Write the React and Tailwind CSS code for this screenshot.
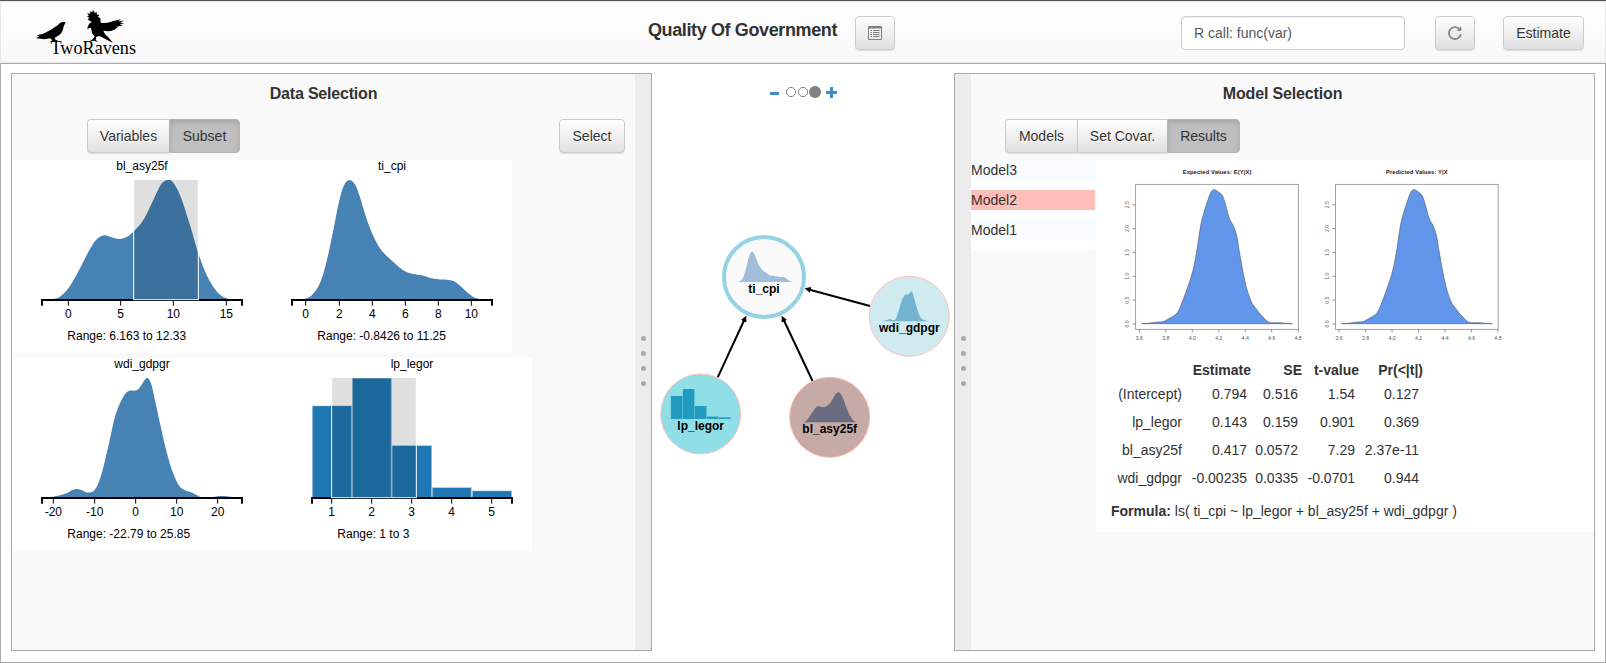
import React from "react";

const spline = (p) => {
  let d = `M${p[0][0]},${p[0][1]}`;
  for (let i = 0; i < p.length - 1; i++) {
    const a = p[i - 1] || p[i];
    const b = p[i];
    const c = p[i + 1];
    const e = p[i + 2] || c;
    d += `C${b[0] + (c[0] - a[0]) / 6},${b[1] + (c[1] - a[1]) / 6} ${c[0] - (e[0] - b[0]) / 6},${c[1] - (e[1] - b[1]) / 6} ${c[0]},${c[1]}`;
  }
  return d;
};

const BL = [[156, 448], [180, 440], [205, 415], [228, 377], [250, 335], [270, 297], [290, 268], [312, 256], [335, 262], [357, 267], [380, 261], [402, 243], [430, 210], [460, 150], [480, 108], [493, 94], [505, 90], [518, 96], [540, 135], [570, 225], [595, 310], [620, 375], [645, 418], [665, 438], [687, 448]];
const TI = [[98, 448], [120, 440], [140, 418], [158, 378], [175, 312], [192, 230], [207, 155], [222, 106], [239, 90], [256, 105], [270, 142], [290, 207], [310, 258], [332, 298], [358, 325], [380, 345], [405, 364], [430, 372], [455, 376], [480, 384], [505, 388], [530, 389], [550, 393], [570, 407], [595, 430], [612, 442], [632, 448]];
const WDI = [[156, 441], [180, 436], [200, 430], [217, 420], [232, 417], [246, 421], [258, 427], [272, 427], [284, 420], [297, 395], [310, 352], [328, 275], [345, 200], [362, 155], [378, 129], [390, 122], [410, 121], [422, 109], [434, 90], [443, 84], [454, 103], [466, 155], [480, 220], [497, 295], [515, 358], [532, 398], [545, 415], [560, 423], [577, 428], [590, 435], [604, 441], [640, 441], [652, 439], [665, 438], [680, 439], [694, 441]];
const BARS = [[66, 167, 120], [186, 84, 119], [305, 286, 121], [426, 412, 119], [546, 422, 120]];
const SIM = [[155, 506], [175, 505], [195, 502], [218, 500], [228, 496], [240, 489], [254, 481], [265, 468], [276, 443], [290, 405], [308, 350], [320, 290], [332, 212], [342, 172], [353, 138], [360, 118], [366, 107], [374, 104], [384, 110], [396, 120], [404, 140], [418, 190], [430, 212], [440, 242], [448, 290], [458, 345], [468, 393], [482, 436], [494, 456], [508, 474], [524, 491], [534, 500], [544, 503], [568, 503], [585, 505], [607, 506]];

const font = "font-['Liberation_Sans',Arial,sans-serif]";

function Btn({ children, active, className = "" }) {
  return (
    <button
      className={`flex h-[34px] items-center justify-center border text-[14px] leading-5 text-[#333] ${
        active
          ? "border-[#b4b4b4] bg-[#bfbfbf] shadow-[inset_0_3px_5px_rgba(0,0,0,0.125)]"
          : "border-[#ccc] bg-linear-to-b from-white to-[#e0e0e0] shadow-[0_1px_1px_rgba(0,0,0,0.1)] [text-shadow:0_1px_0_#fff]"
      } ${className}`}
    >
      {children}
    </button>
  );
}

function Plot({ width = 250, ox, oy, axis, base, ticks, title, titleX, range, rangeX, sel, children }) {
  return (
    <svg width={width} height="193" className="block shrink-0" fontSize="12">
      <text x={titleX} y={(base - 390) / 3 + oy} textAnchor="middle">{title}</text>
      <g transform={`translate(${ox},${oy}) scale(0.33333)`}>
        {children}
        <path d={`M${axis[0]},${base + 17}V${base}H${axis[1]}V${base + 17}`} fill="none" stroke="#000" strokeWidth="5.6" />
        {ticks.map(([x]) => (
          <path key={x} d={`M${x},${base}v17`} stroke="#000" strokeWidth="3" />
        ))}
        {sel && (
          <g>
            <rect x={sel[0]} y={base - 360} width={sel[1] - sel[0]} height="359" fill="#000" fillOpacity="0.125" />
            <rect x={sel[0] - 1} y={base - 362} width={sel[1] - sel[0] + 2} height="361" fill="none" stroke="#fff" strokeWidth="3" />
          </g>
        )}
      </g>
      {ticks.map(([x, l]) => (
        <text key={x} x={x / 3 + ox} y={(base + 54) / 3 + oy} textAnchor="middle">{l}</text>
      ))}
      <text x={rangeX} y={(base + 120) / 3 + oy}>{range}</text>
    </svg>
  );
}

function Handle() {
  return (
    <div className="flex w-4 shrink-0 flex-col items-center gap-[10px] bg-[#ececec] pt-[262px]">
      <i className="size-[5px] rounded-full bg-[#aaa]" />
      <i className="size-[5px] rounded-full bg-[#aaa]" />
      <i className="size-[5px] rounded-full bg-[#aaa]" />
      <i className="size-[5px] rounded-full bg-[#aaa]" />
    </div>
  );
}

function Logo() {
  return (
    <svg width="112" height="56" viewBox="0 0 112 56" className="ml-[33px] mt-[4px] shrink-0">
      <g transform="translate(-34,-6) scale(0.33333)">
        <path d="M197 67L188 66Q179 67 173 76L150 91L130 101L110 106L118 109L108 115L134 118L150 115L158 121L150 124L176 124L165 118L164 113Q182 105 187 94Q190 78 197 67Z" />
        <path d="M261 86L266 74Q270 67 277 68L263 58L268 54L261 49L267 46L261 39L271 41L270 34L277 37L279 29L284 38L292 37L289 43L298 45L294 50L301 55L302 68Q320 72 338 64L364 57L354 64L372 62L360 68L373 70L360 73L368 78L354 79Q347 92 325 94L310 92Q313 104 325 112L339 129L316 117L299 108L289 110L287 119L294 126L282 122L264 127L276 119L284 110L276 99L273 83Z" />
      </g>
      <text x="16.5" y="48.3" fontFamily="'Liberation Serif', serif" fontSize="19.5" textLength="85.5" lengthAdjust="spacingAndGlyphs">TwoRavens</text>
    </svg>
  );
}

function Node({ x, y, fill, ring, w = 1, label, dy, children }) {
  return (
    <g transform={`translate(${x},${y})`}>
      <circle r="40" fill={fill} stroke={ring} strokeWidth={w} />
      {children}
      <text y={dy} textAnchor="middle" fontWeight="bold" fontSize="12">{label}</text>
    </g>
  );
}

function Graph() {
  return (
    <svg width="302" height="380" viewBox="652 100 302 380" className="block">
      <defs>
        <marker id="tip" viewBox="0 -5 10 10" refX="6" markerWidth="3" markerHeight="3" orient="auto">
          <path d="M0,-5L10,0L0,5" />
        </marker>
      </defs>
      <g stroke="#000" strokeWidth="2">
        <path d="M717.7 377.3L745.2 318" markerEnd="url(#tip)" />
        <path d="M812.7 381.3L782.8 318" markerEnd="url(#tip)" />
        <path d="M870 306L807 289" markerEnd="url(#tip)" />
      </g>
      <Node x={764} y={277} fill="#fafafa" ring="#95d2e3" w={4} label="ti_cpi" dy={16}>
        <path transform="translate(-36.6,-32.6) scale(0.1033,0.0838)" d={spline(TI)} fill="#4682b4" fillOpacity="0.5" />
      </Node>
      <Node x={909.3} y={316.3} fill="#d0ebf0" ring="#ffc0bb" label="wdi_gdpgr" dy={16}>
        <path transform="translate(-43.5,-32) scale(0.1033,0.0838)" d={spline(WDI)} fill="#4197bf" fillOpacity="0.65" />
      </Node>
      <Node x={700.7} y={414} fill="#91dfe6" ring="#ffc0bb" label="lp_legor" dy={16}>
        {BARS.map(([x, y, w]) => (
          <rect key={x} x={-30 + (x - 66) * 0.1 + 0.2} y={5 - (441 - y) * 0.084} width={w * 0.1 - 0.4} height={(441 - y) * 0.084} fill="#229bc0" />
        ))}
      </Node>
      <Node x={829.7} y={417.3} fill="#c5aaa5" ring="#ffb5af" label="bl_asy25f" dy={15.5}>
        <path transform="translate(-43.5,-32.5) scale(0.1033,0.0838)" d={spline(BL)} fill="#696c81" />
      </Node>
    </svg>
  );
}

function SimPlot({ dx, title, titleW }) {
  const ys = ["0.0", "0.5", "1.0", "1.5", "2.0", "2.5"];
  const xs = ["3.6", "3.8", "4.0", "4.2", "4.4", "4.6", "4.8"];
  return (
    <g transform={`translate(${dx - 6},-5) scale(0.33333)`} fontSize="15.5" fill="#555" textAnchor="middle">
      <text x="381" y="58" fontSize="17.5" fontWeight="bold" fill="#222" textLength={titleW}>{title}</text>
      <path d={spline(SIM) + "Z"} fill="#6196ea" stroke="#555f70" strokeWidth="2" />
      <rect x="137" y="88" width="488" height="435" fill="none" stroke="#8a8a8a" strokeWidth="2.4" />
      {ys.map((t, i) => (
        <g key={t}>
          <path d={`M128,${507 - i * 71.6}h9`} stroke="#777" strokeWidth="2.4" />
          <text transform={`translate(117,${507 - i * 71.6}) rotate(-90)`}>{t}</text>
        </g>
      ))}
      {xs.map((t, i) => (
        <g key={t}>
          <path d={`M${148 + i * 79.4},523v9`} stroke="#777" strokeWidth="2.4" />
          <text x={148 + i * 79.4} y="556">{t}</text>
        </g>
      ))}
    </g>
  );
}

const rows = [
  ["(Intercept)", "0.794", "0.516", "1.54", "0.127"],
  ["lp_legor", "0.143", "0.159", "0.901", "0.369"],
  ["bl_asy25f", "0.417", "0.0572", "7.29", "2.37e-11"],
  ["wdi_gdpgr", "-0.00235", "0.0335", "-0.0701", "0.944"],
];

export default function App() {
  return (
    <div className={`flex h-[663px] w-[1606px] flex-col overflow-hidden bg-white text-[14px] text-[#333] ${font}`}>
      <header className="flex h-[64px] shrink-0 items-start border-t border-b border-t-[#555] border-b-[#aaa] bg-[#f0f0f0]">
        <div className="flex h-[62px] w-full items-start rounded border border-[#e7e7e7] bg-linear-to-b from-white to-[#f8f8f8]">
          <Logo />
          <h1 className="ml-[502px] mt-[17px] w-[190px] text-[18px] leading-[22px] font-bold tracking-[-0.38px] whitespace-nowrap">Quality Of Government</h1>
          <Btn className="ml-[17px] mt-[14px] w-10 rounded">
            <svg width="14" height="14" viewBox="0 0 14 14" fill="none" stroke="#808080">
              <path d="M.5 .5H13.5V13.5H.5Z" />
              <path d="M1 1.5H13" strokeWidth="2" />
              <path d="M2.5 4.5h1.5M2.5 6.5h1.5M2.5 8.5h1.5M2.5 10.5h1.5M5 4.5h6.5M5 6.5h6.5M5 8.5h6.5M5 10.5h6.5" />
            </svg>
          </Btn>
          <div className="ml-[286px] mt-[14px] flex h-[34px] w-[224px] items-center rounded border border-[#ccc] bg-white px-3 text-[#555] shadow-[inset_0_1px_1px_rgba(0,0,0,0.075)]">
            R call: func(var)
          </div>
          <Btn className="ml-[30px] mt-[14px] w-10 rounded">
            <svg width="14" height="14" viewBox="0 0 14 14" fill="none" stroke="#868686" strokeWidth="1.8">
              <path d="M11.2 2.8A6 6 0 1 0 12.9 8" />
              <path d="M13.4 .2V5H8.6Z" fill="#868686" stroke="none" />
            </svg>
          </Btn>
          <Btn className="ml-[28px] mt-[14px] w-[81px] rounded">Estimate</Btn>
        </div>
      </header>

      <main className="flex flex-1 border-x border-b border-[#aaa] pt-[9px]">
        <section className="ml-[10px] flex h-[578px] w-[641px] shrink-0 border border-[#aaa] bg-[#f9f9f9]">
          <div className="flex flex-1 flex-col">
            <h2 className="mt-[10px] text-center text-[16px] leading-5 font-bold tracking-[-0.2px]">Data Selection</h2>
            <div className="mt-[15px] flex pl-[75px]">
              <Btn className="w-[82px] rounded-l border-r-0">Variables</Btn>
              <Btn active className="w-[71px] rounded-r">Subset</Btn>
              <Btn className="ml-[319px] w-[66px] rounded">Select</Btn>
            </div>
            <div className="mt-[7px] flex w-[500px] bg-white text-black">
              <Plot ox={-12} oy={-10} axis={[126, 726]} base={450} title="bl_asy25f" titleX={130} range="Range: 6.163 to 12.33" rangeX={55.3} sel={[402, 594]} ticks={[[205, "0"], [362, "5"], [520, "10"], [679, "15"]]}>
                <path d={spline(BL)} fill="#4682b4" />
              </Plot>
              <Plot ox={8} oy={-10} axis={[66, 666]} base={450} title="ti_cpi" titleX={130} range="Range: -0.8426 to 11.25" rangeX={55.3} ticks={[[107, "0"], [208, "2"], [307, "4"], [406, "6"], [505, "8"], [604, "10"]]}>
                <path d={spline(TI)} fill="#4682b4" />
              </Plot>
            </div>
            <div className="mt-[5px] flex w-[520px] bg-white text-black">
              <Plot width={270} ox={-12} oy={-8} axis={[126, 726]} base={444} title="wdi_gdpgr" titleX={130} range="Range: -22.79 to 25.85" rangeX={55.3} ticks={[[160, "-20"], [284, "-10"], [407, "0"], [530, "10"], [653, "20"]]}>
                <path d={spline(WDI)} fill="#4682b4" />
              </Plot>
              <Plot ox={8} oy={-8} axis={[66, 666]} base={444} title="lp_legor" titleX={130} range="Range: 1 to 3" rangeX={55.3} sel={[126, 378]} ticks={[[125, "1"], [245, "2"], [365, "3"], [485, "4"], [605, "5"]]}>
                {BARS.map(([x, y, w]) => (
                  <g key={x}>
                    <rect x={x} y={y} width={w} height={441 - y} fill="#1f77b4" />
                    <path d={`M${x + 1},442V${y}H${x + w - 1}V442`} stroke="#fff" strokeOpacity="0.6" strokeWidth="3" fill="none" />
                  </g>
                ))}
              </Plot>
            </div>
          </div>
          <Handle />
        </section>

        <section className="flex w-[302px] shrink-0 flex-col">
          <svg width="302" height="27" viewBox="652 73 302 27" className="block">
            <path d="M770 93.5h9" stroke="#428bca" strokeWidth="3" />
            <circle cx="791" cy="92" r="4.6" fill="#fff" stroke="#808080" />
            <circle cx="803" cy="92" r="4.6" fill="#fff" stroke="#808080" />
            <circle cx="815" cy="92" r="6" fill="#808080" />
            <path d="M826 92.5h11M831.5 87v11" stroke="#428bca" strokeWidth="3" />
          </svg>
          <Graph />
        </section>

        <section className="flex h-[578px] w-[641px] shrink-0 border border-[#aaa] bg-[#f9f9f9]">
          <Handle />
          <div className="flex flex-1 flex-col">
            <h2 className="mt-[10px] text-center text-[16px] leading-5 font-bold tracking-[-0.15px]">Model Selection</h2>
            <div className="mt-[15px] flex pl-[34px]">
              <Btn className="w-[72px] rounded-l border-r-0">Models</Btn>
              <Btn className="w-[90px] border-r-0">Set Covar.</Btn>
              <Btn active className="w-[73px] rounded-r">Results</Btn>
            </div>
            <div className="mt-[7px] flex items-start">
              <div className="flex w-[124px] flex-col gap-[10px] bg-white pb-[10px] leading-5">
                <div className="bg-[#f8fcff]">Model3</div>
                <div className="bg-[#ffbdb8]">Model2</div>
                <div className="bg-[#f8fcff]">Model1</div>
              </div>
              <div className="ml-px h-[372px] flex-1 bg-white">
                <svg width="440" height="200" className="block">
                  <SimPlot dx={0} title="Expected Values: E(Y|X)" titleW={206} />
                  <SimPlot dx={199.8} title="Predicted Values: Y|X" titleW={185} />
                </svg>
                <div className="grid w-[327px] grid-cols-[86px_69px_51px_57px_64px] text-right leading-5 whitespace-nowrap">
                  <span />
                  <b>Estimate</b>
                  <b>SE</b>
                  <b>t-value</b>
                  <b>Pr(&lt;|t|)</b>
                </div>
                <div className="mt-1 grid w-[327px] grid-cols-[86px_69px_51px_57px_64px] gap-y-2 text-right leading-5 whitespace-nowrap">
                  {rows.map((r) =>
                    r.map((c, i) => (
                      <span key={r[0] + i} className={i ? "pr-1" : ""}>{c}</span>
                    ))
                  )}
                </div>
                <p className="mt-[13px] ml-[15px] leading-5 whitespace-nowrap">
                  <b>Formula:</b> ls( ti_cpi ~ lp_legor + bl_asy25f + wdi_gdpgr )
                </p>
              </div>
            </div>
          </div>
        </section>
      </main>
    </div>
  );
}
